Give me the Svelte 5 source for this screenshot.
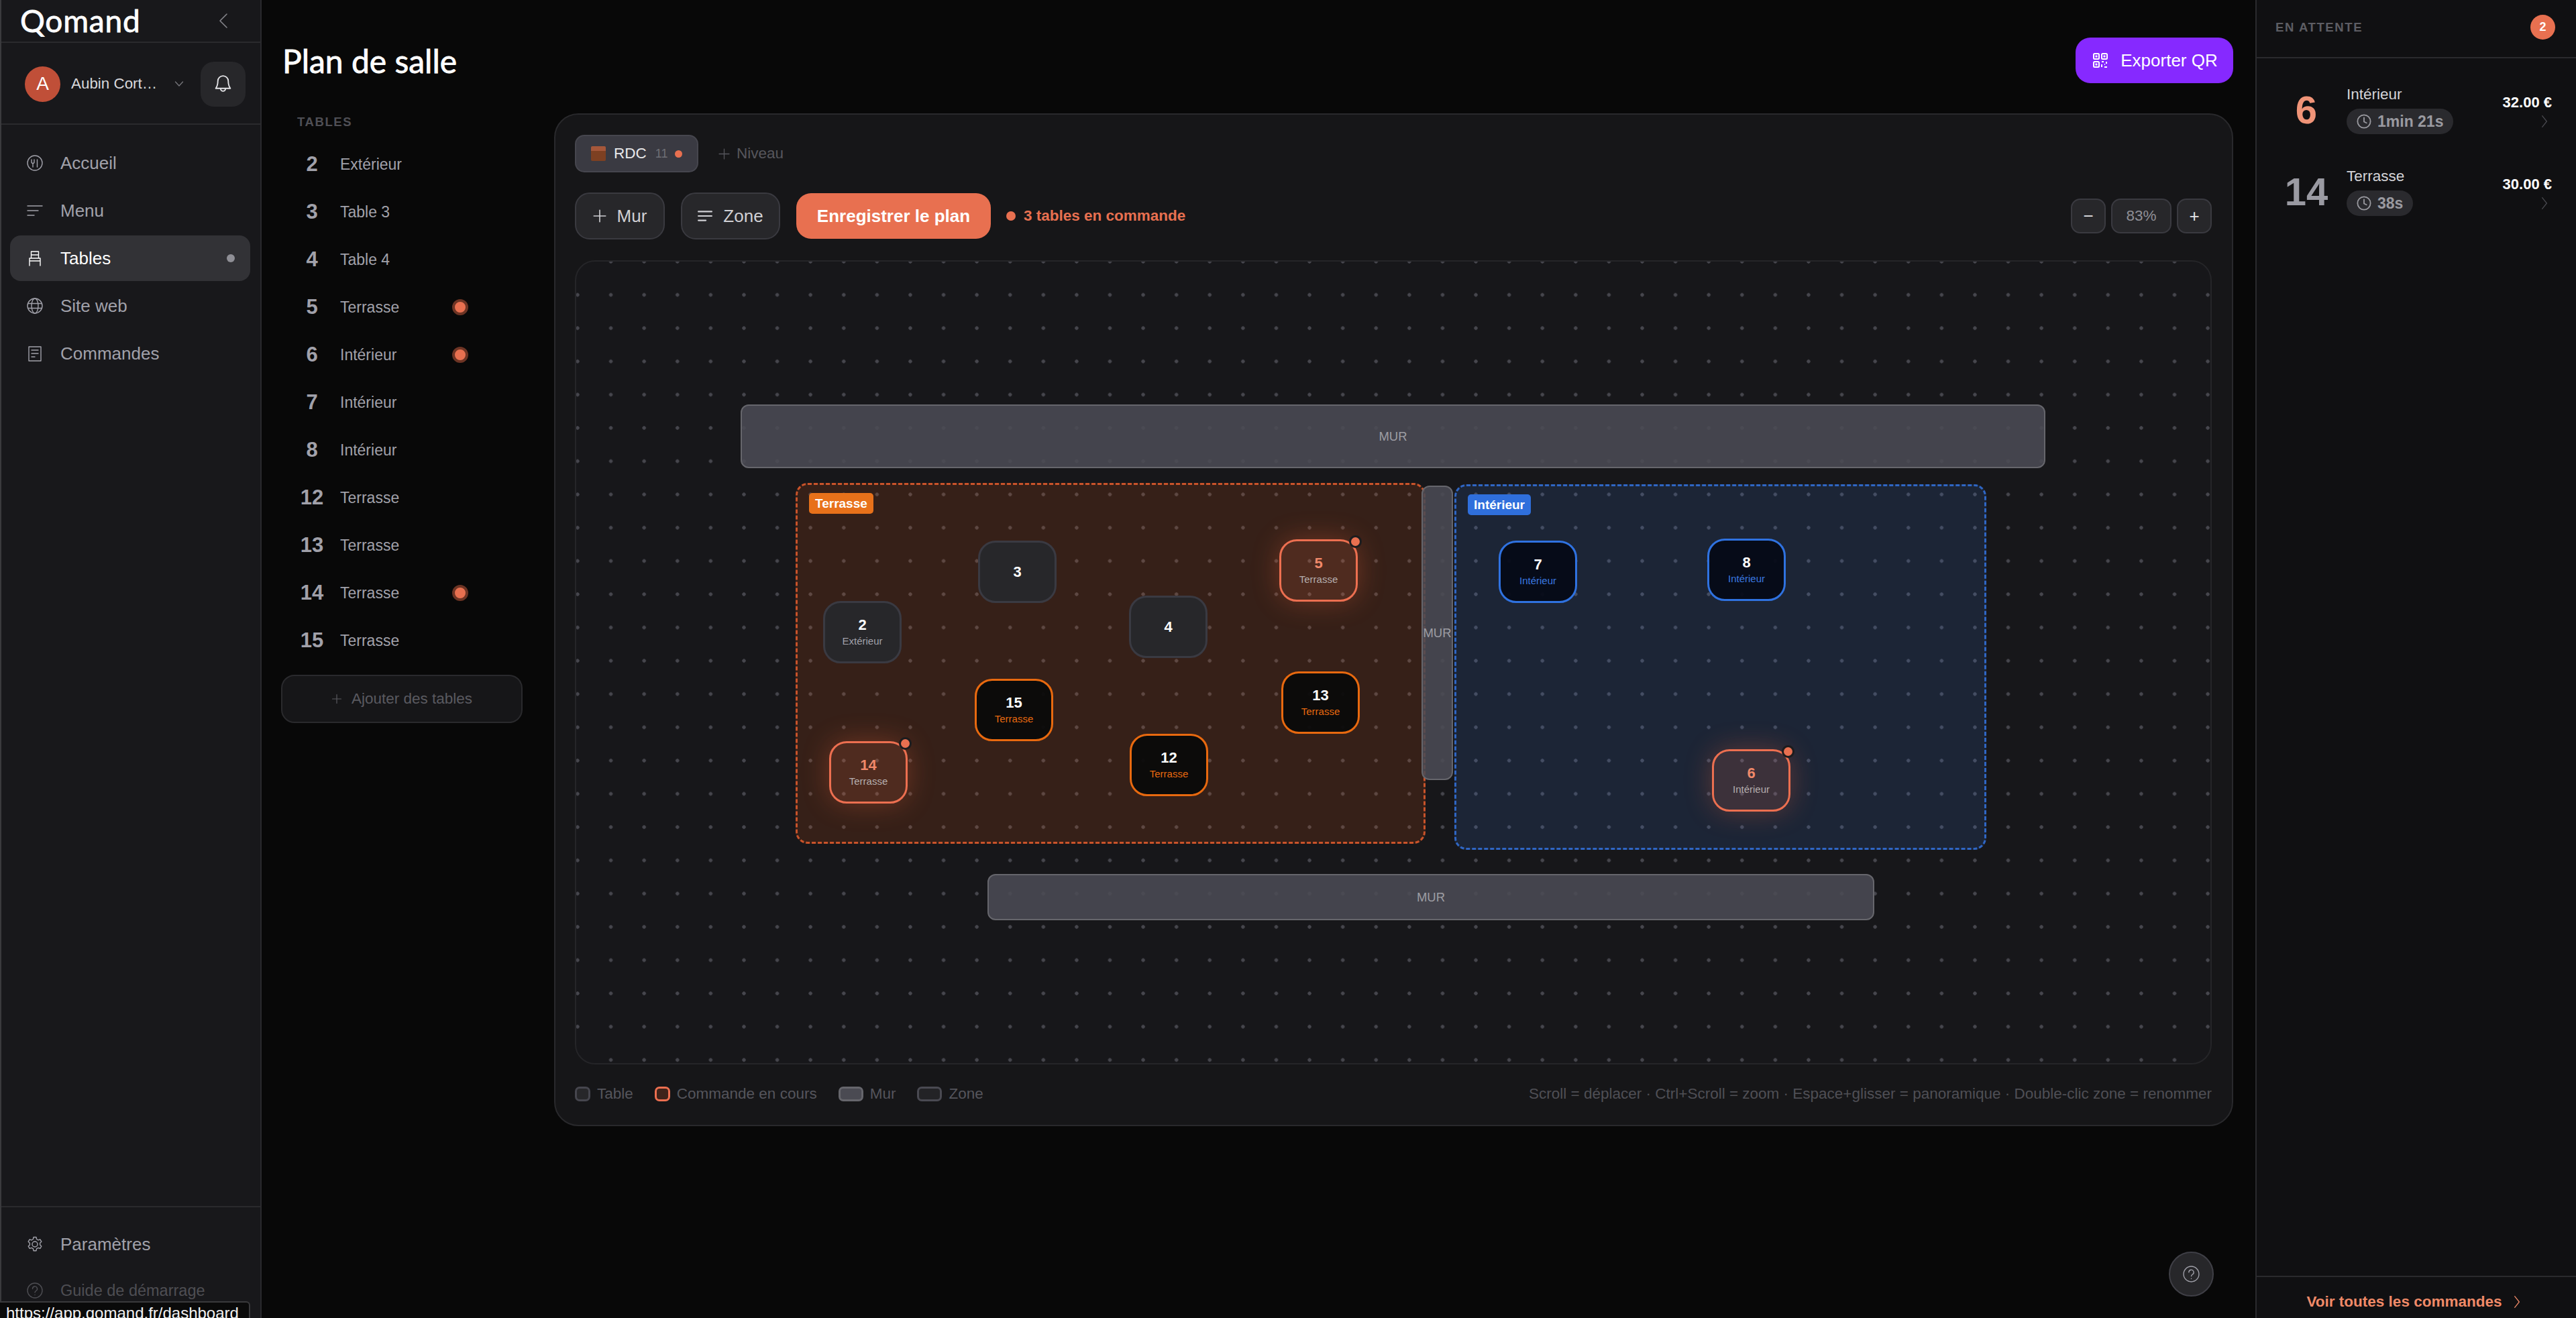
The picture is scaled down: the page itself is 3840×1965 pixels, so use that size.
<script>
	const nav = [
		{ label: 'Accueil', icon: 'food' },
		{ label: 'Menu', icon: 'lines' },
		{ label: 'Tables', icon: 'chair', active: true },
		{ label: 'Site web', icon: 'globe' },
		{ label: 'Commandes', icon: 'receipt' }
	];

	const list = [
		{ n: 2, label: 'Extérieur' },
		{ n: 3, label: 'Table 3' },
		{ n: 4, label: 'Table 4' },
		{ n: 5, label: 'Terrasse', busy: true },
		{ n: 6, label: 'Intérieur', busy: true },
		{ n: 7, label: 'Intérieur' },
		{ n: 8, label: 'Intérieur' },
		{ n: 12, label: 'Terrasse' },
		{ n: 13, label: 'Terrasse' },
		{ n: 14, label: 'Terrasse', busy: true },
		{ n: 15, label: 'Terrasse' }
	];

	// positions relative to the plan canvas
	const ox = 859;
	const oy = 390;

	const walls = [
		{ x: 1104, y: 603, w: 1945, h: 95 },
		{ x: 1472, y: 1303, w: 1322, h: 69 },
		{ x: 2119, y: 724, w: 47, h: 439 }
	];

	const zones = [
		{ name: 'Terrasse', kind: 'orange', x: 1186, y: 720, w: 939, h: 538 },
		{ name: 'Intérieur', kind: 'blue', x: 2168, y: 722, w: 793, h: 545 }
	];

	const tables = [
		{ n: 2, sub: 'Extérieur', x: 1227, y: 896, kind: 'plain' },
		{ n: 3, x: 1458, y: 806, kind: 'plain' },
		{ n: 4, x: 1683, y: 888, kind: 'plain' },
		{ n: 5, sub: 'Terrasse', x: 1907, y: 804, kind: 'busy' },
		{ n: 15, sub: 'Terrasse', x: 1453, y: 1012, kind: 'orange' },
		{ n: 13, sub: 'Terrasse', x: 1910, y: 1001, kind: 'orange' },
		{ n: 12, sub: 'Terrasse', x: 1684, y: 1094, kind: 'orange' },
		{ n: 14, sub: 'Terrasse', x: 1236, y: 1105, kind: 'busy' },
		{ n: 7, sub: 'Intérieur', x: 2234, y: 806, kind: 'blue' },
		{ n: 8, sub: 'Intérieur', x: 2545, y: 803, kind: 'blue' },
		{ n: 6, sub: 'Intérieur', x: 2552, y: 1117, kind: 'busy inblue' }
	];

	const orders = [
		{ n: 6, hot: true, zone: 'Intérieur', time: '1min 21s', price: '32.00 €' },
		{ n: 14, zone: 'Terrasse', time: '38s', price: '30.00 €' }
	];
</script>

{#snippet icon(name)}
	<svg class="ico" viewBox="0 0 24 24" fill="none" stroke="currentColor" stroke-width="1.4" stroke-linecap="round" stroke-linejoin="round">
		{#if name === 'food'}
			<circle cx="12" cy="12" r="11" />
			<path d="M7 7v3.5a2 2 0 0 0 2 2h0a2 2 0 0 0 2-2V7M9 12.5V18M15.5 7v11" />
		{:else if name === 'lines'}
			<path d="M1 5h22M1 12h16M1 19h10" />
		{:else if name === 'chair'}
			<path d="M6.5 2h11v10h-11zM6.5 7h11M4 12h16M4 12v11M20 12v11M4 16h16" />
		{:else if name === 'globe'}
			<circle cx="12" cy="12" r="11" />
			<path d="M1.5 8.5h21M1.5 15.5h21" />
			<ellipse cx="12" cy="12" rx="5" ry="11" />
		{:else if name === 'receipt'}
			<path d="M3 2h18v21H3zM7 7h10M7 12h10M7 17h5" />
		{:else if name === 'gear'}
			<circle cx="12" cy="12" r="4" />
			<path d="M10 1.500h4l.6 3 2.400 1.300 2.800-1 2 3.400-2.200 2 .1 2.800 2.100 2-2 3.400-2.800-1-2.400 1.300-.6 3h-4l-.6-3L7 17.400l-2.800 1-2-3.400 2.200-2-.1-2.800-2.100-2 2-3.400 2.800 1L9.400 4.500z" />
		{:else if name === 'help'}
			<circle cx="12" cy="12" r="11" />
			<path d="M8.500 9.500a3.500 3.500 0 1 1 5.200 3c-1.100.7-1.700 1.300-1.700 2.500M12 18.500v.1" />
		{/if}
	</svg>
{/snippet}

{#snippet clock()}
	<svg class="clock" viewBox="0 0 24 24" fill="none" stroke="currentColor" stroke-width="2" stroke-linecap="round" stroke-linejoin="round">
		<circle cx="12" cy="12" r="10.500" />
		<path d="M12 6v6.500l4 2" />
	</svg>
{/snippet}

{#snippet chevron(cls)}
	<svg class={cls} viewBox="0 0 12 24" fill="none" stroke="currentColor" stroke-width="1.500" stroke-linecap="round" stroke-linejoin="round">
		<path d="M2 2l8 10-8 10" />
	</svg>
{/snippet}

<div class="app">
	<aside class="sidebar">
		<div class="brand">
			<span class="logo">Qomand</span>
			<svg class="collapse" viewBox="0 0 14 24" fill="none" stroke="currentColor" stroke-width="1.600" stroke-linecap="round" stroke-linejoin="round">
				<path d="M12 2L2 12l10 10" />
			</svg>
		</div>
		<div class="user">
			<span class="avatar">A</span>
			<span class="username">Aubin Cort…</span>
			<svg class="caret" viewBox="0 0 14 10" fill="none" stroke="currentColor" stroke-width="1.300" stroke-linecap="round" stroke-linejoin="round">
				<path d="M1.500 2l5.500 6 5.500-6" />
			</svg>
			<button class="bell" aria-label="Notifications">
				<svg viewBox="0 0 24 28" fill="none" stroke="currentColor" stroke-width="1.800" stroke-linecap="round" stroke-linejoin="round">
					<path d="M12 2a7.500 7.500 0 0 0-7.500 7.500c0 6-1.500 8.500-3 10.500h21c-1.500-2-3-4.500-3-10.500A7.500 7.500 0 0 0 12 2zM8.500 20.500a3.500 3.500 0 0 0 7 0" />
				</svg>
			</button>
		</div>
		<nav class="nav">
			{#each nav as item}
				<a class="nav-item" class:active={item.active} href="#top">
					{@render icon(item.icon)}
					<span>{item.label}</span>
					{#if item.active}<i class="nav-dot"></i>{/if}
				</a>
			{/each}
		</nav>
		<div class="side-foot">
			<a class="nav-item" href="#top">
				{@render icon('gear')}
				<span>Paramètres</span>
			</a>
			<a class="nav-item dim" href="#top">
				{@render icon('help')}
				<span>Guide de démarrage</span>
			</a>
		</div>
	</aside>

	<main class="main">
		<header class="head">
			<h1>Plan de salle</h1>
			<button class="export">
				<svg viewBox="0 0 24 24" fill="none" stroke="currentColor" stroke-width="2">
					<rect x="2" y="2" width="8" height="8" rx="1.500" />
					<rect x="14" y="2" width="8" height="8" rx="1.500" />
					<rect x="2" y="14" width="8" height="8" rx="1.500" />
					<path d="M5.500 5.500h1v1h-1zM17.500 5.500h1v1h-1zM5.500 17.500h1v1h-1zM14 14h3M21 14v3M14 18v4M18 18h1M18 22h4" />
				</svg>
				Exporter QR
			</button>
		</header>

		<div class="body">
			<section class="tables">
				<div class="tables-title">TABLES</div>
				<ul>
					{#each list as row}
						<li>
							<b>{row.n}</b>
							<span>{row.label}</span>
							{#if row.busy}<i class="busy-dot"></i>{/if}
						</li>
					{/each}
				</ul>
				<button class="add">
					<svg viewBox="0 0 16 16" fill="none" stroke="currentColor" stroke-width="1.200" stroke-linecap="round"><path d="M8 1.500v13M1.500 8h13" /></svg>
					Ajouter des tables
				</button>
			</section>

			<section class="card">
				<div class="levels">
					<div class="level">
						<i class="brick"></i>
						<span class="level-name">RDC</span>
						<span class="level-count">11</span>
						<i class="level-dot"></i>
					</div>
					<div class="add-level">
						<svg viewBox="0 0 16 16" fill="none" stroke="currentColor" stroke-width="1.200" stroke-linecap="round"><path d="M8 1v14M1 8h14" /></svg>
						Niveau
					</div>
				</div>

				<div class="tools">
					<button class="tool mur">
						<svg viewBox="0 0 16 16" fill="none" stroke="currentColor" stroke-width="1.300" stroke-linecap="round"><path d="M8 1v14M1 8h14" /></svg>
						Mur
					</button>
					<button class="tool zone-btn">
						<svg viewBox="0 0 20 16" fill="none" stroke="currentColor" stroke-width="2" stroke-linecap="round"><path d="M1 2h18M1 8h18M1 14h10" /></svg>
						Zone
					</button>
					<button class="save">Enregistrer le plan</button>
					<span class="status"><i></i>3 tables en commande</span>
					<div class="zoom">
						<button class="zoom-btn" aria-label="Réduire">−</button>
						<span class="zoom-val">83%</span>
						<button class="zoom-btn" aria-label="Agrandir">+</button>
					</div>
				</div>

				<div class="canvas">
					{#each zones as z}
						<div class="zone {z.kind}" style="left:{z.x - ox}px;top:{z.y - oy}px;width:{z.w}px;height:{z.h}px">
							<span class="zone-tag">{z.name}</span>
						</div>
					{/each}
					{#each walls as w}
						<div class="wall" style="left:{w.x - ox}px;top:{w.y - oy}px;width:{w.w}px;height:{w.h}px">MUR</div>
					{/each}
					{#each tables as t}
						<div class="table {t.kind}" style="left:{t.x - ox}px;top:{t.y - oy}px">
							<b>{t.n}</b>
							{#if t.sub}<small>{t.sub}</small>{/if}
							{#if t.kind.startsWith('busy')}<i class="pin"></i>{/if}
						</div>
					{/each}
				</div>

				<footer class="legend">
					<span class="key"><i class="sw sw-table"></i>Table</span>
					<span class="key"><i class="sw sw-busy"></i>Commande en cours</span>
					<span class="key"><i class="sw sw-wall"></i>Mur</span>
					<span class="key"><i class="sw sw-zone"></i>Zone</span>
					<span class="hint">Scroll = déplacer · Ctrl+Scroll = zoom · Espace+glisser = panoramique · Double-clic zone = renommer</span>
				</footer>
			</section>
		</div>

		<button class="help" aria-label="Aide">
			<svg viewBox="0 0 24 24" fill="none" stroke="currentColor" stroke-width="1.300" stroke-linecap="round" stroke-linejoin="round">
				<circle cx="12" cy="12" r="11" />
				<path d="M8.500 9.500a3.500 3.500 0 1 1 5.200 3c-1.100.7-1.700 1.300-1.700 2.500M12 18.500v.1" />
			</svg>
		</button>
	</main>

	<aside class="pending">
		<div class="pending-head">
			<span>EN ATTENTE</span>
			<i class="count">2</i>
		</div>
		<div class="orders">
			{#each orders as o}
				<div class="order">
					<b class="order-n" class:hot={o.hot}>{o.n}</b>
					<div class="order-mid">
						<span class="order-zone">{o.zone}</span>
						<span class="pill">{@render clock()}{o.time}</span>
					</div>
					<div class="order-end">
						<b>{o.price}</b>
						{@render chevron('order-chev')}
					</div>
				</div>
			{/each}
		</div>
		<div class="pending-foot">
			Voir toutes les commandes
			{@render chevron('foot-chev')}
		</div>
	</aside>

	<div class="url">https://app.qomand.fr/dashboard</div>
</div>

<style>
	:global(body) {
		margin: 0;
		background: #080808;
	}

	.app {
		display: flex;
		width: 3840px;
		height: 1965px;
		overflow: hidden;
		position: relative;
		font-family: 'Liberation Sans', Arial, sans-serif;
		color: #fff;
		background: #080808;
	}

	button {
		font-family: inherit;
		cursor: pointer;
	}

	i {
		display: block;
	}

	/* sidebar */
	.sidebar {
		width: 390px;
		flex: none;
		box-sizing: border-box;
		display: flex;
		flex-direction: column;
		background: #18181b;
		border-left: 2px solid #3a3a3d;
		border-right: 2px solid #2a2a2d;
	}

	.brand {
		height: 64px;
		flex: none;
		box-sizing: border-box;
		display: flex;
		align-items: center;
		justify-content: space-between;
		padding: 0 48px 0 28px;
		border-bottom: 2px solid #2a2a2d;
	}

	.logo {
		font-family: Lato, sans-serif;
		font-weight: 400;
		font-size: 46px;
		line-height: 54px;
		letter-spacing: 0.8px;
		-webkit-text-stroke: 0.8px #fff;
	}

	.collapse {
		width: 14px;
		height: 24px;
		color: #85858b;
	}

	.user {
		height: 122px;
		flex: none;
		box-sizing: border-box;
		display: flex;
		align-items: center;
		padding: 2px 0 0 35px;
		border-bottom: 2px solid #2a2a2d;
		position: relative;
	}

	.avatar {
		width: 53px;
		height: 53px;
		flex: none;
		border-radius: 50%;
		background: #c04f38;
		display: flex;
		align-items: center;
		justify-content: center;
		font-size: 28px;
	}

	.username {
		margin-left: 16px;
		width: 128px;
		font-size: 22.400px;
		color: #d8d8dc;
		white-space: nowrap;
	}

	.caret {
		width: 14px;
		height: 10px;
		margin-left: 26px;
		color: #77777c;
	}

	.bell {
		width: 67px;
		height: 67px;
		margin-left: 25px;
		padding: 0;
		border: 0;
		border-radius: 20px;
		background: #27272a;
		color: #e4e4e7;
		display: flex;
		align-items: center;
		justify-content: center;
	}

	.bell svg {
		width: 27px;
		height: 29px;
	}

	.nav {
		display: flex;
		flex-direction: column;
		gap: 3px;
		padding: 23px 15px 0 13px;
	}

	.nav-item {
		height: 68px;
		display: flex;
		align-items: center;
		gap: 26px;
		padding: 0 23px 0 25px;
		border-radius: 16px;
		font-size: 26px;
		color: #a1a1aa;
		text-decoration: none;
	}

	.nav-item.active {
		background: #323236;
		color: #fff;
	}

	.nav-item.dim {
		color: #4e4e53;
		font-size: 23.500px;
	}

	.ico {
		width: 24px;
		height: 24px;
		flex: none;
	}

	.nav-dot {
		width: 12px;
		height: 12px;
		margin-left: auto;
		border-radius: 50%;
		background: #8f8f96;
	}

	.side-foot {
		margin-top: auto;
		padding: 21px 15px 7px 13px;
		border-top: 2px solid #2a2a2d;
		display: flex;
		flex-direction: column;
		gap: 1px;
	}

	/* main column */
	.main {
		flex: 1;
		min-width: 0;
		box-sizing: border-box;
		padding: 56px 33px 0 29px;
		position: relative;
	}

	.head {
		height: 68px;
		margin-bottom: 45px;
		display: flex;
		align-items: center;
		justify-content: space-between;
	}

	h1 {
		margin: 2px 0 0 2px;
		font-family: Lato, sans-serif;
		font-weight: 400;
		font-size: 48px;
		line-height: 1;
		color: #fff;
		-webkit-text-stroke: 0.8px #fff;
	}

	.export {
		width: 235px;
		height: 68px;
		padding: 0 0 0 2px;
		border: 0;
		border-radius: 22px;
		background: #8629ff;
		color: #fff;
		font-size: 26px;
		display: flex;
		align-items: center;
		justify-content: center;
		gap: 18px;
	}

	.export svg {
		width: 24px;
		height: 24px;
	}

	.body {
		display: flex;
		gap: 47px;
	}

	/* table list */
	.tables {
		width: 360px;
		flex: none;
	}

	.tables-title {
		height: 26px;
		line-height: 26px;
		padding-left: 24px;
		font-size: 18.500px;
		font-weight: 700;
		letter-spacing: 1.600px;
		color: #4f4f55;
	}

	.tables ul {
		list-style: none;
		margin: 16px 0 0;
		padding: 0;
		display: flex;
		flex-direction: column;
		gap: 3px;
	}

	.tables li {
		height: 68px;
		display: grid;
		grid-template-columns: 60px 179px 24px;
		align-items: center;
		padding-left: 16px;
	}

	.tables li b {
		text-align: center;
		font-size: 31px;
		color: #a1a1aa;
	}

	.tables li span {
		margin-left: 12px;
		font-size: 23px;
		color: #a1a1aa;
		white-space: nowrap;
	}

	.busy-dot {
		width: 16px;
		height: 16px;
		border-radius: 50%;
		background: #e87050;
		border: 4px solid #6d3424;
	}

	.add {
		width: 360px;
		height: 72px;
		margin-top: 17px;
		padding: 0;
		border: 2px solid #2a2a2d;
		border-radius: 20px;
		background: #161618;
		color: #5a5a60;
		font-size: 22.500px;
		display: flex;
		align-items: center;
		justify-content: center;
		gap: 14px;
	}

	.add svg {
		width: 16px;
		height: 16px;
	}

	/* plan card */
	.card {
		flex: 1;
		min-width: 0;
		box-sizing: border-box;
		height: 1510px;
		padding: 30px 30px 29px 29px;
		border: 2px solid #29292c;
		border-radius: 36px;
		background: #161618;
		display: flex;
		flex-direction: column;
	}

	.levels {
		height: 56px;
		flex: none;
		display: flex;
		align-items: center;
		gap: 30px;
	}

	.level {
		width: 184px;
		height: 56px;
		box-sizing: border-box;
		display: flex;
		align-items: center;
		padding-left: 22px;
		border: 2px solid #46464e;
		border-radius: 14px;
		background: #3a3a42;
	}

	.brick {
		width: 22px;
		height: 22px;
		background: linear-gradient(#a5573a 0 30%, #7d4022 30%);
		border-radius: 2px;
	}

	.level-name {
		margin-left: 12px;
		font-size: 22.500px;
		color: #e8e8ea;
	}

	.level-count {
		margin-left: 13px;
		font-size: 18px;
		color: #6f6f76;
	}

	.level-dot {
		width: 11px;
		height: 11px;
		margin-left: 11px;
		border-radius: 50%;
		background: #e87050;
	}

	.add-level {
		display: flex;
		align-items: center;
		gap: 10px;
		font-size: 22.500px;
		color: #56565c;
	}

	.add-level svg {
		width: 17px;
		height: 17px;
	}

	.tools {
		height: 70px;
		flex: none;
		margin-top: 30px;
		display: flex;
		align-items: center;
	}

	.tool {
		height: 70px;
		box-sizing: border-box;
		display: flex;
		align-items: center;
		justify-content: center;
		gap: 16px;
		padding: 0;
		border: 2px solid #3a3a40;
		border-radius: 22px;
		background: #27272a;
		color: #d0d0d4;
		font-size: 26px;
		margin-right: 24px;
	}

	.tool.mur {
		width: 134px;
	}

	.tool.zone-btn {
		width: 148px;
	}

	.tool svg {
		width: 20px;
		height: 20px;
	}

	.tool.zone-btn svg {
		width: 22px;
		height: 18px;
	}

	.save {
		width: 290px;
		height: 68px;
		padding: 0;
		border: 0;
		border-radius: 22px;
		background: #e87050;
		color: #fff;
		font-size: 26px;
		font-weight: 700;
	}

	.status {
		display: flex;
		align-items: center;
		gap: 12px;
		margin-left: 23px;
		font-size: 22.500px;
		font-weight: 700;
		color: #e87050;
	}

	.status i {
		width: 14px;
		height: 14px;
		border-radius: 50%;
		background: #e87050;
	}

	.zoom {
		margin-left: auto;
		display: flex;
		gap: 8px;
		align-items: center;
	}

	.zoom-btn,
	.zoom-val {
		height: 52px;
		box-sizing: border-box;
		border: 2px solid #3a3a40;
		border-radius: 14px;
		background: #27272a;
		display: flex;
		align-items: center;
		justify-content: center;
	}

	.zoom-btn {
		width: 52px;
		padding: 0;
		color: #e4e4e7;
		font-size: 26px;
	}

	.zoom-val {
		width: 90px;
		color: #8f8f96;
		font-size: 22.500px;
	}

	/* canvas */
	.canvas {
		height: 1199px;
		flex: none;
		box-sizing: border-box;
		margin-top: 31px;
		position: relative;
		overflow: hidden;
		border: 2px solid #252528;
		border-radius: 30px;
		background-color: #17171a;
		background-image: radial-gradient(circle, #46464d 2.400px, transparent 3px);
		background-size: 49.600px 49.600px;
		background-position: -22.800px -24.800px;
	}

	.zone {
		position: absolute;
		box-sizing: border-box;
		border-radius: 18px;
		border: 3px dashed;
	}

	.zone.orange {
		border-color: #c9532a;
		background: rgba(234, 88, 12, 0.15);
	}

	.zone.blue {
		border-color: #2f66c4;
		background: rgba(59, 130, 246, 0.13);
	}

	.zone-tag {
		position: absolute;
		left: 17px;
		top: 12px;
		height: 31px;
		line-height: 31px;
		padding: 0 9px;
		border-radius: 5px;
		font-size: 19px;
		font-weight: 700;
		color: #fff;
	}

	.orange .zone-tag {
		background: #e8711a;
	}

	.blue .zone-tag {
		background: #2f6fdc;
	}

	.wall {
		position: absolute;
		box-sizing: border-box;
		border: 2px solid #66666c;
		border-radius: 12px;
		background: rgba(75, 75, 84, 0.88);
		color: #9d9da3;
		font-size: 18.500px;
		display: flex;
		align-items: center;
		justify-content: center;
		white-space: nowrap;
	}

	.table {
		position: absolute;
		width: 117px;
		height: 93px;
		box-sizing: border-box;
		display: flex;
		flex-direction: column;
		align-items: center;
		justify-content: center;
		gap: 3px;
		border: 3px solid #3a3a42;
		border-radius: 26px;
		background: #27272a;
	}

	.table b {
		font-size: 22px;
		line-height: 24px;
		color: #fff;
	}

	.table small {
		font-size: 15px;
		line-height: 18px;
		color: #a1a1aa;
	}

	.table.orange {
		border-color: #e8690f;
		background: rgba(10, 10, 10, 0.94);
	}

	.table.orange small {
		color: #e8690f;
	}

	.table.blue {
		border-color: #2f72e0;
		background: rgba(5, 10, 22, 0.94);
	}

	.table.blue small {
		color: #3a78e0;
	}

	.table.busy {
		border-color: #ec6f50;
		background: rgba(232, 112, 80, 0.14);
		box-shadow: 0 0 40px rgba(232, 100, 60, 0.32);
	}

	.table.busy b {
		color: #f0896a;
	}

	.table.busy small {
		color: #b5aeae;
	}

	.table.inblue {
		background: rgba(232, 112, 80, 0.16);
	}

	.pin {
		position: absolute;
		top: -9px;
		right: -9px;
		width: 13px;
		height: 13px;
		border-radius: 50%;
		background: #e87050;
		border: 3px solid #1c1c1e;
	}

	/* legend */
	.legend {
		height: 30px;
		margin-top: 29px;
		flex: none;
		display: flex;
		align-items: center;
		font-size: 22.500px;
		color: #55555c;
	}

	.key {
		display: flex;
		align-items: center;
		gap: 10px;
		margin-right: 32px;
	}

	.sw {
		height: 22px;
		box-sizing: border-box;
		border-radius: 7px;
		border: 3px solid;
	}

	.sw-table {
		width: 23px;
		border-color: #46464e;
		background: #27272a;
	}

	.sw-busy {
		width: 23px;
		border-color: #ec6f50;
		background: #3e231a;
	}

	.sw-wall {
		width: 37px;
		border-color: #66666c;
		background: #4a4a52;
	}

	.sw-zone {
		width: 37px;
		border-color: #4a4a52;
		background: #232326;
	}

	.hint {
		margin-left: auto;
		color: #4f4f55;
		font-size: 22.500px;
		white-space: nowrap;
	}

	.help {
		position: absolute;
		right: 62px;
		bottom: 32px;
		width: 67px;
		height: 67px;
		padding: 0;
		border: 2px solid #3f3f46;
		border-radius: 50%;
		background: #27272a;
		color: #a1a1aa;
		display: flex;
		align-items: center;
		justify-content: center;
	}

	.help svg {
		width: 25px;
		height: 25px;
	}

	/* pending orders */
	.pending {
		width: 478px;
		flex: none;
		box-sizing: border-box;
		display: flex;
		flex-direction: column;
		background: #101012;
		border-left: 2px solid #2a2a2d;
	}

	.pending-head {
		height: 87px;
		flex: none;
		box-sizing: border-box;
		display: flex;
		align-items: center;
		justify-content: space-between;
		padding: 0 31px 4px 28px;
		border-bottom: 2px solid #2a2a2d;
		font-size: 18.500px;
		font-weight: 700;
		letter-spacing: 1.600px;
		color: #5d5d63;
	}

	.count {
		width: 37px;
		height: 37px;
		border-radius: 50%;
		background: #e87050;
		color: #fff;
		font-style: normal;
		font-size: 18px;
		letter-spacing: 0;
		display: flex;
		align-items: center;
		justify-content: center;
	}

	.orders {
		flex: 1;
		padding-top: 26px;
		display: flex;
		flex-direction: column;
		gap: 22px;
	}

	.order {
		height: 100px;
		display: flex;
		align-items: center;
	}

	.order-n {
		width: 134px;
		text-align: center;
		font-size: 58px;
		color: #9a9aa2;
		padding-left: 14px;
		box-sizing: border-box;
		flex: none;
	}

	.order-n.hot {
		color: #f09478;
	}

	.order-mid {
		flex: 1;
		display: flex;
		flex-direction: column;
		align-items: flex-start;
		gap: 6px;
	}

	.order-zone {
		font-size: 22.500px;
		line-height: 30px;
		color: #d4d4d8;
	}

	.pill {
		height: 38px;
		box-sizing: border-box;
		display: flex;
		align-items: center;
		gap: 9px;
		padding: 0 15px;
		border-radius: 19px;
		background: #2a2a2e;
		color: #9a9aa0;
		font-size: 23px;
		font-weight: 700;
	}

	.clock {
		width: 22px;
		height: 22px;
	}

	.order-end {
		margin-right: 36px;
		padding-top: 6px;
		display: flex;
		flex-direction: column;
		align-items: flex-end;
		gap: 3px;
		font-size: 22px;
	}

	.order-chev {
		width: 10px;
		height: 24px;
		margin-right: 6px;
		color: #4a4a50;
	}

	.pending-foot {
		height: 63px;
		flex: none;
		box-sizing: border-box;
		display: flex;
		align-items: center;
		justify-content: center;
		gap: 18px;
		padding: 12px 8px 0 0;
		border-top: 2px solid #2a2a2d;
		font-size: 22.500px;
		font-weight: 700;
		color: #f08a68;
	}

	.foot-chev {
		width: 10px;
		height: 22px;
	}

	.url {
		position: absolute;
		left: 0;
		bottom: 0;
		width: 373px;
		height: 25px;
		box-sizing: border-box;
		padding: 2px 0 0 9px;
		overflow: hidden;
		background: #0a0a0a;
		border: 2px solid #3a3a3c;
		border-width: 2px 2px 0 0;
		border-top-right-radius: 6px;
		font-size: 24px;
		line-height: 27px;
		color: #f2f2f2;
		white-space: nowrap;
	}
</style>
